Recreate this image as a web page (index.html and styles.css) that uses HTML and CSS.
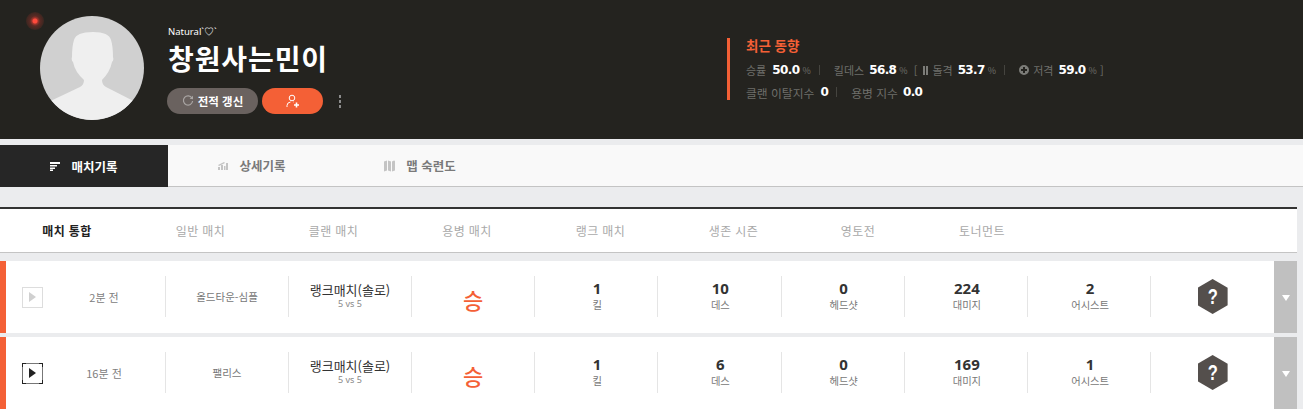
FILE: index.html
```html
<!DOCTYPE html>
<html lang="ko">
  <head>
    <meta charset="UTF-8" />
    <title>창원사는민이 - 전적</title>
    <link rel="stylesheet" href="styles.css">
  </head>
  <body>
    <header class="profile">
      <div class="avatar-wrap">
        <span class="live-dot"></span>
        <svg class="avatar" viewBox="0 0 104 104">
          <circle cx="52" cy="52" r="52" fill="#d0d0d0" />
          <path fill="#efefef" d="M11.5 84.5 L40 71 Q44 69 44 64 Q35 56 33 46 Q31 44 32 41 Q32 30 34 24 Q36 16 53 16 Q69 16 71 24 Q73 30 73 41 Q74 44 72 46 Q70 56 62 64 Q62 69 66 71 L92.5 84.5 A52 52 0 0 1 11.5 84.5 Z" />
        </svg>
      </div>
      <div class="identity">
        <div class="clan">Natural`♡`</div>
        <h1 class="nick">창원사는민이</h1>
        <div class="actions">
          <button class="btn btn-refresh">
            <svg class="btn-icon" viewBox="0 0 12 12"><path fill="none" stroke="#a9a5a3" stroke-width="1.2" d="M10 3.2 A4.6 4.6 0 1 0 10.6 6" /><path fill="#a9a5a3" d="M7.6 3.8 L11 4.2 L11 .8 Z" /></svg>
            전적 갱신
          </button>
          <button class="btn btn-follow">
            <svg class="btn-icon" viewBox="0 0 14 14"><circle cx="6" cy="4" r="2.8" fill="none" stroke="#fff" stroke-width="1" /><path fill="none" stroke="#fff" stroke-width="1" d="M1 13 V11.5 Q1 8.5 4.5 8 M7.5 8 H8" /><path fill="none" stroke="#fff" stroke-width="1.6" d="M8 11 H13 M10.5 8.5 V13.5" /></svg>
          </button>
          <span class="more"><i></i><i></i><i></i></span>
        </div>
      </div>
      <div class="trend">
        <h2 class="trend-title">최근 동향</h2>
        <div class="trend-row">
          <span>승률</span><b>50.0</b><small>%</small><em class="sep"></em>
          <span>킬데스</span><b>56.8</b><small>%</small>
          <span class="bracket">[</span>
          <svg class="glyph" viewBox="0 0 5 9"><path fill="#7c7c78" d="M0 0H2V9H0ZM3 0H5V9H3Z" /></svg><span>돌격</span><b>53.7</b><small>%</small><em class="sep"></em>
          <svg class="glyph round" viewBox="0 0 10 10"><path fill="#7c7c78" fill-rule="evenodd" d="M5 0A5 5 0 1 1 5 10A5 5 0 1 1 5 0ZM4 2V4H2V6H4V8H6V6H8V4H6V2Z" /></svg><span>저격</span><b>59.0</b><small>%</small><span class="bracket">]</span>
        </div>
        <div class="trend-row wide">
          <span>클랜 이탈지수</span><b>0</b><em class="sep"></em>
          <span>용병 지수</span><b>0.0</b>
        </div>
      </div>
    </header>

    <nav class="tabs">
      <a class="tab active">
        <svg class="tab-icon" viewBox="0 0 10 9"><path fill="#fff" d="M0 0H10V2H0ZM0 3H7V4.5H0ZM0 5.5H5V7H0ZM0 7.5H3V9H0Z" /></svg>
        매치기록
      </a>
      <a class="tab">
        <svg class="tab-icon" viewBox="0 0 10 9"><path fill="#c4c4c4" d="M0 6H2V9H0ZM3 4H5V9H3ZM6 5H7.5V9H6ZM8 2H10V9H8ZM0 4 L6 1 L7 2 L1 5Z" /></svg>
        상세기록
      </a>
      <a class="tab">
        <svg class="tab-icon map" viewBox="0 0 11 12"><path fill="#c4c4c4" d="M0 1.5 L3 .5 V10.5 L0 11.5ZM4 .5 L7 1.5 V11.5 L4 10.5ZM8 1.5 L10 .5 Q11 .5 11 1.5 V10.5 L8 11.5Z" /></svg>
        맵 숙련도
      </a>
    </nav>

    <section class="filter">
      <a class="filter-item on w1">매치 통합</a>
      <a class="filter-item w2">일반 매치</a>
      <a class="filter-item w3">클랜 매치</a>
      <a class="filter-item w4">용병 매치</a>
      <a class="filter-item w5">랭크 매치</a>
      <a class="filter-item w6">생존 시즌</a>
      <a class="filter-item w7">영토전</a>
      <a class="filter-item w8">토너먼트</a>
    </section>

    <section class="matches">
      <article class="match">
        <div class="play off"><span></span></div>
        <div class="cell when">2분 전</div>
        <div class="cell map-name">올드타운-심플</div>
        <div class="cell mode"><strong>랭크매치(솔로)</strong><small>5 vs 5</small></div>
        <div class="cell result">승</div>
        <div class="cell stat"><strong>1</strong><small>킬</small></div>
        <div class="cell stat"><strong>10</strong><small>데스</small></div>
        <div class="cell stat"><strong>0</strong><small>헤드샷</small></div>
        <div class="cell stat"><strong>224</strong><small>대미지</small></div>
        <div class="cell stat"><strong>2</strong><small>어시스트</small></div>
        <div class="cell rank"><div class="hex"><span>?</span></div></div>
        <div class="drop"><span></span></div>
      </article>
      <article class="match">
        <div class="play"><span></span></div>
        <div class="cell when">16분 전</div>
        <div class="cell map-name">팰리스</div>
        <div class="cell mode"><strong>랭크매치(솔로)</strong><small>5 vs 5</small></div>
        <div class="cell result">승</div>
        <div class="cell stat"><strong>1</strong><small>킬</small></div>
        <div class="cell stat"><strong>6</strong><small>데스</small></div>
        <div class="cell stat"><strong>0</strong><small>헤드샷</small></div>
        <div class="cell stat"><strong>169</strong><small>대미지</small></div>
        <div class="cell stat"><strong>1</strong><small>어시스트</small></div>
        <div class="cell rank"><div class="hex"><span>?</span></div></div>
        <div class="drop"><span></span></div>
      </article>
    </section>
  </body>
</html>
```

FILE: styles.css
```css
* {
  box-sizing: border-box;
}

html,
body {
  height: 409px;
  overflow: hidden;
}

body {
  margin: 0;
  background-color: #ebecee;
  color: #333;
  font-family: "Noto Sans CJK KR", "Noto Sans", sans-serif;
}

/* Profile header */
.profile {
  display: flex;
  height: 139px;
  padding: 16px 0 0 40px;
  background-color: #24231f;
}

.avatar-wrap {
  position: relative;
  width: 104px;
  height: 104px;
  margin-right: 23px;
}

.avatar {
  display: block;
  width: 104px;
  height: 104px;
}

.live-dot {
  position: absolute;
  top: -4px;
  left: -14px;
  width: 18px;
  height: 18px;
  border-radius: 50%;
  background: radial-gradient(circle, #ff4a3c 0 2px, #a3352c 3px, #5a2a24 5px, #3a2620 9px);
}

.identity {
  width: 560px;
  padding-top: 10px;
}

.clan {
  height: 12px;
  margin-left: 1px;
  color: #fff;
  font-family: "Noto Sans", sans-serif;
  font-size: 9.5px;
  line-height: 12px;
}

.nick {
  height: 34px;
  margin: 3px 0 13px 1px;
  color: #fff;
  font-size: 28px;
  font-weight: 700;
  letter-spacing: 0.9px;
  line-height: 34px;
}

.actions {
  display: flex;
  align-items: center;
  gap: 4px;
}

.btn {
  display: flex;
  align-items: center;
  justify-content: center;
  height: 26px;
  padding: 0;
  border: 0;
  border-radius: 13px;
  color: #fff;
  font-family: inherit;
  font-size: 11.5px;
  font-weight: 700;
}

.btn-refresh {
  gap: 4px;
  width: 91px;
  background-color: #6a625f;
}

.btn-follow {
  width: 61px;
  background-color: #f46036;
}

.btn-icon {
  width: 12px;
  height: 12px;
}

.btn-follow .btn-icon {
  width: 14px;
  height: 14px;
}

.more {
  display: flex;
  flex-direction: column;
  gap: 2px;
  margin-left: 12px;
}

.more i {
  width: 2px;
  height: 3px;
  background-color: #8c8c8c;
}

/* Recent trend block */
.trend {
  height: 62px;
  margin-top: 22px;
  padding-left: 16px;
  border-left: 3px solid #f46036;
}

.trend-title {
  height: 14px;
  margin: 0 0 11px;
  color: #f46036;
  font-size: 13.5px;
  font-weight: 700;
  line-height: 14px;
}

.trend-row {
  display: flex;
  align-items: center;
  height: 14px;
  margin-bottom: 8px;
  color: #6f6f6b;
  font-size: 11px;
  white-space: nowrap;
}

.trend-row.wide {
  font-size: 11.8px;
}

.trend-row b {
  margin-left: 5px;
  color: #fff;
  font-family: "DejaVu Sans", sans-serif;
  font-size: 12px;
  font-weight: 700;
  letter-spacing: -0.6px;
}

.trend-row b:first-of-type {
  margin-left: 6px;
}

.trend-row small {
  margin-left: 3px;
  font-size: 9px;
}

.sep {
  width: 1px;
  height: 10px;
  margin: 0 14px 0 8px;
  background-color: #45443f;
}

.bracket {
  margin: 0 6px 0 6px;
}

.bracket:last-child {
  margin: 0 0 0 3px;
}

.glyph {
  width: 5px;
  height: 9px;
  margin-right: 4px;
}

.glyph.round {
  width: 10px;
  height: 10px;
  margin-right: 4px;
}

/* Tabs */
.tabs {
  display: flex;
  height: 42px;
  margin-top: 6px;
  border-top: 1px solid #f9f9f9;
  border-bottom: 1px solid #c4c4c4;
  background-color: #f9f9f9;
}

.tab {
  display: flex;
  align-items: center;
  justify-content: center;
  gap: 11px;
  width: 168px;
  margin-top: -1px;
  color: #7a7a7a;
  font-size: 12.5px;
  font-weight: 700;
}

.tab.active {
  height: 42px;
  background-color: #262626;
  color: #fff;
}

.tab-icon {
  width: 10px;
  height: 9px;
}

.tab-icon.map {
  width: 11px;
  height: 12px;
}

/* Match type filter */
.filter {
  display: flex;
  align-items: center;
  width: 1297px;
  height: 46px;
  margin-top: 20px;
  border-top: 2px solid #333;
  border-bottom: 1px solid #c4c4c4;
  background-color: #fff;
  font-size: 12px;
  letter-spacing: 0.4px;
}

.filter-item {
  flex: none;
  color: #a9a9a9;
  text-align: center;
}

.filter-item.on {
  color: #222;
  font-weight: 700;
}

.w1 { width: 134px; }
.w2 { width: 133px; }
.w3 { width: 133px; }
.w4 { width: 134px; }
.w5 { width: 133px; }
.w6 { width: 133px; }
.w7 { width: 116px; }
.w8 { width: 132px; }

/* Match rows */
.matches {
  display: flex;
  flex-direction: column;
  gap: 4px;
  width: 1297px;
  margin-top: 8px;
}

.match {
  display: flex;
  flex: none;
  align-items: center;
  height: 72px;
  border-left: 6px solid #f46036;
  background-color: #fff;
}

.play {
  display: flex;
  flex: none;
  align-items: center;
  justify-content: center;
  width: 21px;
  height: 21px;
  margin-left: 16px;
  background:
    linear-gradient(#222, #222) 0 0 / 4px 1px no-repeat,
    linear-gradient(#222, #222) 100% 0 / 4px 1px no-repeat,
    linear-gradient(#222, #222) 0 100% / 4px 1px no-repeat,
    linear-gradient(#222, #222) 100% 100% / 4px 1px no-repeat,
    linear-gradient(#222, #222) 0 0 / 1px 4px no-repeat,
    linear-gradient(#222, #222) 100% 0 / 1px 4px no-repeat,
    linear-gradient(#222, #222) 0 100% / 1px 4px no-repeat,
    linear-gradient(#222, #222) 100% 100% / 1px 4px no-repeat,
    linear-gradient(#777, #777) 0 0 / 100% 1px no-repeat,
    linear-gradient(#777, #777) 0 100% / 100% 1px no-repeat,
    linear-gradient(#777, #777) 0 0 / 1px 100% no-repeat,
    linear-gradient(#777, #777) 100% 0 / 1px 100% no-repeat;
}

.play span {
  width: 0;
  height: 0;
  border-top: 5px solid transparent;
  border-bottom: 5px solid transparent;
  border-left: 7px solid #222;
}

.play.off {
  background:
    linear-gradient(#ddd, #ddd) 0 0 / 100% 1px no-repeat,
    linear-gradient(#ddd, #ddd) 0 100% / 100% 1px no-repeat,
    linear-gradient(#ddd, #ddd) 0 0 / 1px 100% no-repeat,
    linear-gradient(#ddd, #ddd) 100% 0 / 1px 100% no-repeat;
}

.play.off span {
  border-left-color: #d0d0d0;
}

.cell {
  display: flex;
  flex: none;
  flex-direction: column;
  align-items: center;
  justify-content: center;
  height: 41px;
  margin-top: -1px;
  border-right: 1px solid #e5e5e5;
  text-align: center;
}

.when {
  width: 123px;
  color: #808080;
  font-size: 11px;
}

.map-name {
  width: 123px;
  color: #777;
  font-size: 10.5px;
}

.mode {
  width: 123px;
  padding-bottom: 3px;
}

.mode strong {
  color: #333;
  font-size: 13px;
  font-weight: 400;
  line-height: 17px;
}

.mode small {
  color: #888;
  font-family: "Noto Sans", sans-serif;
  font-size: 9px;
  line-height: 12px;
}

.result {
  width: 123px;
  padding-top: 4px;
  color: #f46036;
  font-size: 22px;
  font-weight: 500;
}

.stat {
  width: 123.25px;
  padding-bottom: 1px;
  padding-left: 2px;
}

.stat strong {
  color: #333;
  font-family: "Noto Sans", sans-serif;
  font-size: 15px;
  font-weight: 700;
  line-height: 17px;
}

.stat small {
  color: #777;
  font-size: 10.3px;
  line-height: 15px;
}

.rank {
  width: 122.75px;
  border-right: 0;
}

.hex {
  width: 30px;
  height: 35px;
  clip-path: polygon(50% 0, 100% 25%, 100% 75%, 50% 100%, 0 75%, 0 25%);
  background-color: #544f4c;
  color: #fff;
  font-family: "Liberation Sans", sans-serif;
  font-size: 22px;
  font-weight: 700;
  line-height: 35px;
  text-align: center;
}

.hex span {
  display: inline-block;
  transform: scaleX(0.75);
}

.drop {
  display: flex;
  flex: none;
  align-items: center;
  justify-content: center;
  align-self: stretch;
  width: 23px;
  background-color: #c0c0c0;
}

.drop span {
  width: 0;
  height: 0;
  margin-top: 1px;
  border-top: 6px solid #fff;
  border-right: 4px solid transparent;
  border-left: 4px solid transparent;
}
```
